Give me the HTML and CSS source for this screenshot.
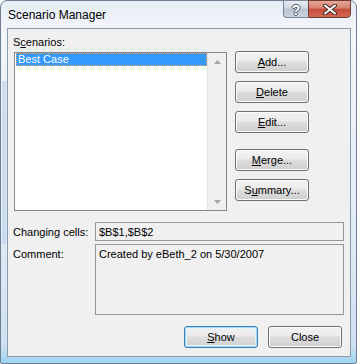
FILE: index.html
```html
<!DOCTYPE html>
<html lang="en">
<head>
  <meta charset="UTF-8">
  <title>Scenario Manager</title>
  <link rel="stylesheet" href="styles.css">
</head>
<body>
  <div class="window">
    <div class="titlebar">
      <span class="title">Scenario Manager</span>
      <div class="caption-buttons">
        <span class="cap-btn help">?</span>
        <span class="cap-btn close">
          <svg width="14" height="11" viewBox="0 0 14 11">
            <path d="M2 1.5 L12 9.5 M12 1.5 L2 9.5" stroke="#3a2a28" stroke-width="4" stroke-linecap="round"/>
            <path d="M2 1.5 L12 9.5 M12 1.5 L2 9.5" stroke="#fff" stroke-width="2" stroke-linecap="round"/>
          </svg>
        </span>
      </div>
    </div>

    <div class="client">
      <div class="top">
        <div class="scenarios">
          <div class="label">S<u>c</u>enarios:</div>
          <div class="listbox">
            <div class="items">
              <div class="item selected">Best Case</div>
            </div>
            <div class="scrollbar">
              <svg width="7" height="4" viewBox="0 0 7 4"><path d="M3.5 0 L7 4 L0 4 Z" fill="#a6a6a6"/></svg>
              <svg width="7" height="4" viewBox="0 0 7 4"><path d="M0 0 L7 0 L3.5 4 Z" fill="#a6a6a6"/></svg>
            </div>
          </div>
        </div>

        <div class="side-buttons">
          <button class="btn"><u>A</u>dd...</button>
          <button class="btn"><u>D</u>elete</button>
          <button class="btn"><u>E</u>dit...</button>
          <button class="btn spaced"><u>M</u>erge...</button>
          <button class="btn">S<u>u</u>mmary...</button>
        </div>
      </div>

      <div class="field-row">
        <div class="field-label">Changing cells:</div>
        <div class="textbox">$B$1,$B$2</div>
      </div>
      <div class="field-row">
        <div class="field-label">Comment:</div>
        <div class="textbox multi">Created by eBeth_2 on 5/30/2007</div>
      </div>

      <div class="bottom-buttons">
        <button class="btn default"><u>S</u>how</button>
        <button class="btn">Close</button>
      </div>
    </div>
  </div>
</body>
</html>
```

FILE: styles.css
```css
body {
  margin: 0;
  background: #fff;
  font-family: "Liberation Sans", Arial, sans-serif;
  font-size: 11px;
}

.window {
  width: 357px;
  height: 364px;
  box-sizing: border-box;
  border: 1px solid #6e7f91;
  border-radius: 7px 7px 2px 2px;
  padding: 0 5px 6px 6px;
  background:
    linear-gradient(to right, transparent 0, #c3d7ee 3px, transparent 7px) 0 40% / 100% 45% no-repeat,
    linear-gradient(to bottom, #e6edf6 0, #f3f6fa 30px, #e4ecf5 60%, #cfe0f2 95%, #9fd4f2 100%);
  display: flex;
  flex-direction: column;
}

.titlebar {
  height: 27px;
  display: flex;
  justify-content: space-between;
  align-items: flex-start;
}

.title {
  font-size: 12px;
  color: #000;
  padding: 7px 0 0 1px;
  line-height: 14px;
}

.caption-buttons {
  display: flex;
  margin-top: -1px;
}

.cap-btn {
  height: 18px;
  box-sizing: border-box;
  display: flex;
  align-items: center;
  justify-content: center;
}

.help {
  width: 25px;
  border: 1px solid #7c8898;
  border-right: none;
  border-radius: 0 0 0 4px;
  background: linear-gradient(#e6ebf1, #d0d8e2 45%, #b9c4d1 50%, #c9d3de);
  color: #fff;
  font: bold 14px "Liberation Sans", Arial, sans-serif;
  text-shadow: 1px 0 #4d5866, -1px 0 #4d5866, 0 1px #4d5866, 0 -1px #4d5866;
  padding-top: 1px;
}

.close {
  width: 43px;
  border: 1px solid #6b3a34;
  border-radius: 0 0 4px 0;
  background: linear-gradient(#e6a797, #d6826f 45%, #c4493a 50%, #d56a52);
}

.client {
  flex: 1;
  border: 1px solid #8c99a8;
  background: #f0f0f0;
  padding: 7px 6px 0 5px;
  display: flex;
  flex-direction: column;
}

.top {
  display: flex;
}

.scenarios {
  width: 214px;
}

.label {
  line-height: 13px;
  margin-bottom: 3px;
}

.listbox {
  margin-left: 1px;
  width: 213px;
  height: 159px;
  box-sizing: border-box;
  border: 1px solid #828790;
  background: #fff;
  display: flex;
}

.items {
  flex: 1;
  padding-left: 1px;
}

.item {
  line-height: 11px;
  padding-left: 1px;
  border: 1px dotted transparent;
}

.item.selected {
  background: #3399ff;
  color: #fff;
  border-color: #f4a460;
}

.scrollbar {
  width: 18px;
  background: #efefef;
  border-left: 1px solid #e3e3e3;
  display: flex;
  flex-direction: column;
  justify-content: space-between;
  align-items: center;
  padding: 7px 0 6px;
}

.side-buttons {
  margin-left: 8px;
  padding-top: 15px;
  display: flex;
  flex-direction: column;
  gap: 8px;
}

.side-buttons .spaced {
  margin-top: 8px;
}

.btn {
  width: 74px;
  height: 22px;
  box-sizing: border-box;
  border: 1px solid #707070;
  border-radius: 3px;
  background: linear-gradient(#f2f2f2, #ebebeb 45%, #dddddd 50%, #cfcfcf);
  box-shadow: inset 0 0 0 1px #fbfbfb;
  font: 11px "Liberation Sans", Arial, sans-serif;
  color: #000;
  padding: 0;
}

.btn.default {
  border-color: #3c7fb1;
  box-shadow: inset 0 0 0 1px #9fdaf6, inset 0 0 0 2px #e4f4fc;
}

.field-row {
  display: flex;
  margin-top: 11px;
}

.field-row + .field-row {
  margin-top: 3px;
}

.field-label {
  width: 82px;
  line-height: 13px;
  padding-top: 4px;
}

.textbox {
  width: 249px;
  height: 19px;
  box-sizing: border-box;
  border: 1px solid #979797;
  background: #f0f0f0;
  padding: 3px 3px 0;
  line-height: 13px;
}

.textbox.multi {
  height: 71px;
}

.bottom-buttons {
  display: flex;
  justify-content: flex-end;
  gap: 10px;
  margin-top: 11px;
  padding-right: 2px;
}
```
